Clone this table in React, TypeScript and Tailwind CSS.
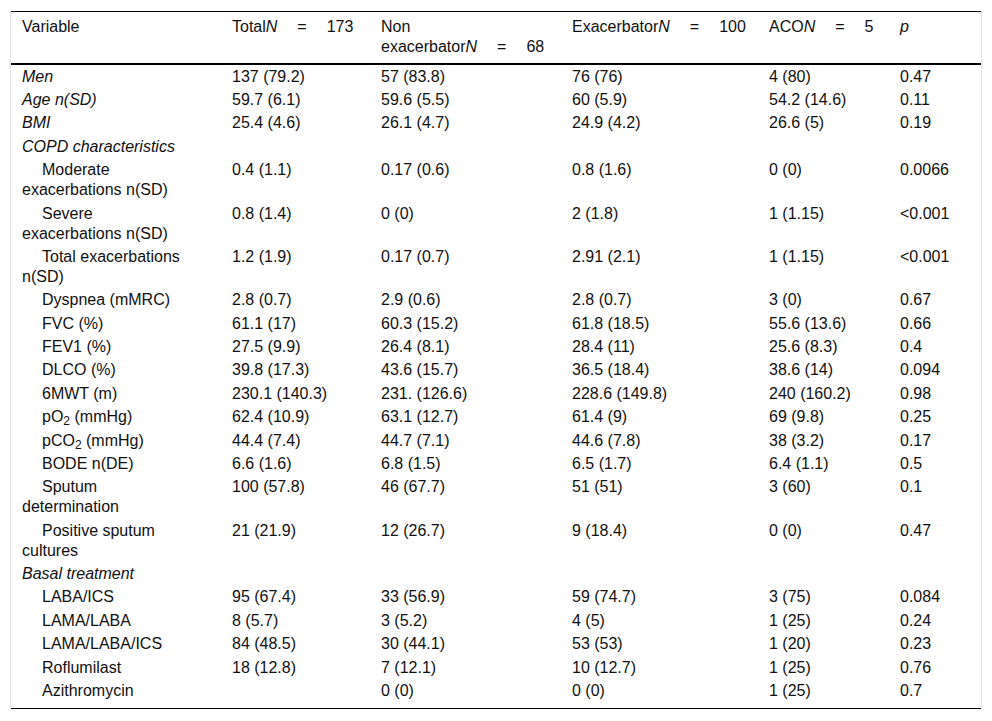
import React from 'react';

type Row = {
  label: React.ReactNode;
  italic?: boolean;
  sub?: boolean;
  values?: string[];
};

const rows: Row[] = [
  { label: 'Men', italic: true, values: ['137 (79.2)', '57 (83.8)', '76 (76)', '4 (80)', '0.47'] },
  { label: 'Age n(SD)', italic: true, values: ['59.7 (6.1)', '59.6 (5.5)', '60 (5.9)', '54.2 (14.6)', '0.11'] },
  { label: 'BMI', italic: true, values: ['25.4 (4.6)', '26.1 (4.7)', '24.9 (4.2)', '26.6 (5)', '0.19'] },
  { label: 'COPD characteristics', italic: true },
  { label: 'Moderate exacerbations n(SD)', sub: true, values: ['0.4 (1.1)', '0.17 (0.6)', '0.8 (1.6)', '0 (0)', '0.0066'] },
  { label: 'Severe exacerbations n(SD)', sub: true, values: ['0.8 (1.4)', '0 (0)', '2 (1.8)', '1 (1.15)', '<0.001'] },
  { label: 'Total exacerbations n(SD)', sub: true, values: ['1.2 (1.9)', '0.17 (0.7)', '2.91 (2.1)', '1 (1.15)', '<0.001'] },
  { label: 'Dyspnea (mMRC)', sub: true, values: ['2.8 (0.7)', '2.9 (0.6)', '2.8 (0.7)', '3 (0)', '0.67'] },
  { label: 'FVC (%)', sub: true, values: ['61.1 (17)', '60.3 (15.2)', '61.8 (18.5)', '55.6 (13.6)', '0.66'] },
  { label: 'FEV1 (%)', sub: true, values: ['27.5 (9.9)', '26.4 (8.1)', '28.4 (11)', '25.6 (8.3)', '0.4'] },
  { label: 'DLCO (%)', sub: true, values: ['39.8 (17.3)', '43.6 (15.7)', '36.5 (18.4)', '38.6 (14)', '0.094'] },
  { label: '6MWT (m)', sub: true, values: ['230.1 (140.3)', '231. (126.6)', '228.6 (149.8)', '240 (160.2)', '0.98'] },
  {
    label: (
      <>
        pO<sub>2</sub> (mmHg)
      </>
    ),
    sub: true,
    values: ['62.4 (10.9)', '63.1 (12.7)', '61.4 (9)', '69 (9.8)', '0.25'],
  },
  {
    label: (
      <>
        pCO<sub>2</sub> (mmHg)
      </>
    ),
    sub: true,
    values: ['44.4 (7.4)', '44.7 (7.1)', '44.6 (7.8)', '38 (3.2)', '0.17'],
  },
  { label: 'BODE n(DE)', sub: true, values: ['6.6 (1.6)', '6.8 (1.5)', '6.5 (1.7)', '6.4 (1.1)', '0.5'] },
  { label: 'Sputum determination', sub: true, values: ['100 (57.8)', '46 (67.7)', '51 (51)', '3 (60)', '0.1'] },
  { label: 'Positive sputum cultures', sub: true, values: ['21 (21.9)', '12 (26.7)', '9 (18.4)', '0 (0)', '0.47'] },
  { label: 'Basal treatment', italic: true },
  { label: 'LABA/ICS', sub: true, values: ['95 (67.4)', '33 (56.9)', '59 (74.7)', '3 (75)', '0.084'] },
  { label: 'LAMA/LABA', sub: true, values: ['8 (5.7)', '3 (5.2)', '4 (5)', '1 (25)', '0.24'] },
  { label: 'LAMA/LABA/ICS', sub: true, values: ['84 (48.5)', '30 (44.1)', '53 (53)', '1 (20)', '0.23'] },
  { label: 'Roflumilast', sub: true, values: ['18 (12.8)', '7 (12.1)', '10 (12.7)', '1 (25)', '0.76'] },
  { label: 'Azithromycin', sub: true, values: ['', '0 (0)', '0 (0)', '1 (25)', '0.7'] },
];

const NEq = ({ n }: { n: string }) => (
  <span className="whitespace-nowrap">
    <i>N</i>
    <span className="mx-[20px]">=</span>
    {n}
  </span>
);

const App = () => {
  return (
    <div className="min-h-[721px] bg-white font-['Liberation_Sans',Arial,sans-serif] text-[16px] leading-[20px] text-[#111]">
      <div className="ml-[10px] mt-[10px] w-[972px] border-x border-[#e6e6e6] pt-px">
        <table className="w-full table-fixed border-collapse border-t border-b border-black text-left">
          <colgroup>
            <col className="w-[210px]" />
            <col className="w-[149px]" />
            <col className="w-[191px]" />
            <col className="w-[197px]" />
            <col className="w-[131px]" />
            <col />
          </colgroup>
          <thead>
            <tr className="border-b-2 border-black align-top">
              <th className="pl-[11px] pr-[30px] pt-[5px] pb-[6px] font-normal">Variable</th>
              <th className="pl-[11px] pr-[10px] pt-[5px] pb-[6px] font-normal whitespace-nowrap">
                Total
                <NEq n="173" />
              </th>
              <th className="pl-[11px] pr-[30px] pt-[5px] pb-[6px] font-normal">
                Non exacerbator
                <NEq n="68" />
              </th>
              <th className="pl-[11px] pr-[10px] pt-[5px] pb-[6px] font-normal whitespace-nowrap">
                Exacerbator
                <NEq n="100" />
              </th>
              <th className="pl-[11px] pr-[10px] pt-[5px] pb-[6px] font-normal whitespace-nowrap">
                ACO
                <NEq n="5" />
              </th>
              <th className="pl-[11px] pr-[10px] pt-[5px] pb-[6px] font-normal">
                <i>p</i>
              </th>
            </tr>
          </thead>
          <tbody>
            {rows.map((r, i) => {
              const last = i === rows.length - 1;
              const pad = last ? 'pt-[1.7px] pb-[7px]' : 'py-[1.7px]';
              return (
                <tr key={i} className="align-top">
                  <td
                    className={`pl-[11px] pr-[30px] ${pad} ${r.italic ? 'italic' : ''} ${r.sub ? 'indent-[20px]' : ''}`}
                  >
                    {r.label}
                  </td>
                  {[0, 1, 2, 3, 4].map((c) => (
                    <td key={c} className={`pl-[11px] pr-[10px] ${pad}`}>
                      {r.values ? r.values[c] : ''}
                    </td>
                  ))}
                </tr>
              );
            })}
          </tbody>
        </table>
      </div>
    </div>
  );
};

export default App;
